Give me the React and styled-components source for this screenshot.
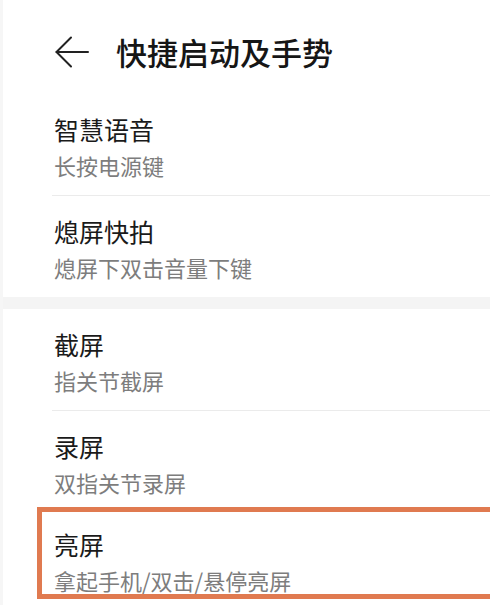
import styled, { createGlobalStyle } from 'styled-components'

const GlobalStyle = createGlobalStyle`
    html, body {
        margin: 0;
        padding: 0;
        background: #ffffff;
        overflow: hidden;
    }
    body {
        font-family: "Noto Sans CJK SC", "Noto Sans", sans-serif;
        color: #1a1a1a;
    }
`

const Page = styled.div`
    width: 100%;
    height: 605px;
    overflow: hidden;
    border-left: 3px solid #f6f6f6;
    box-sizing: border-box;
`

const Header = styled.div`
    display: flex;
    align-items: center;
    height: 34px;
    padding: 35px 0 25px 52px;
`

const BackButton = styled.div`
    display: flex;
    align-items: center;
    width: 34px;
    height: 32px;
    margin-right: 27px;
`

const Title = styled.h1`
    margin: 0;
    font-size: 31px;
    font-weight: 500;
    line-height: 34px;
    color: #161616;
`

const Section = styled.div`
    display: flex;
    flex-direction: column;
`

const Gap = styled.div`
    height: 12px;
    background: #f4f4f4;
`

const Row = styled.div`
    display: flex;
    flex-direction: column;
    padding: ${p => p.$highlight ? '16px 0 0 12px' : '19px 0 16px 51px'};
    margin: ${p => p.$highlight ? '-5px -30px 0 34px' : '0'};
    border: ${p => p.$highlight ? '5px solid #e07a50' : 'none'};
    border-right: none;
`

const RowTitle = styled.div`
    font-size: 25px;
    line-height: 32px;
    color: #1a1a1a;
`

const RowSub = styled.div`
    margin-top: 6px;
    font-size: 22px;
    line-height: 28px;
    color: #7d7d7d;
`

const Divider = styled.div`
    height: 1px;
    margin-left: 49px;
    background: #ebebeb;
`

const BackArrow = () => (
    <svg width="34" height="32" viewBox="0 0 34 32" fill="none" stroke="#222" strokeWidth="2" strokeLinecap="round" strokeLinejoin="round">
        <polyline points="16,1.5 1.5,16 16,30.5" />
        <line x1="1.5" y1="16" x2="33" y2="16" />
    </svg>
)

const groups = [
    [
        { title: '智慧语音', sub: '长按电源键' },
        { title: '熄屏快拍', sub: '熄屏下双击音量下键' },
    ],
    [
        { title: '截屏', sub: '指关节截屏' },
        { title: '录屏', sub: '双指关节录屏' },
        { title: '亮屏', sub: '拿起手机/双击/悬停亮屏', highlight: true },
    ],
]

const App = () => {
    return (
        <>
            <GlobalStyle />
            <Page>
                <Header>
                    <BackButton><BackArrow /></BackButton>
                    <Title>快捷启动及手势</Title>
                </Header>
                {groups.map((items, gi) => (
                    <div key={gi}>
                        {gi > 0 ? <Gap /> : null}
                        <Section>
                            {items.map((item, i) => (
                                <div key={item.title}>
                                    <Row $highlight={item.highlight}>
                                        <RowTitle>{item.title}</RowTitle>
                                        <RowSub>{item.sub}</RowSub>
                                    </Row>
                                    {i < items.length - 1 && !items[i + 1].highlight ? <Divider /> : null}
                                </div>
                            ))}
                        </Section>
                    </div>
                ))}
            </Page>
        </>
    )
}

export default App
